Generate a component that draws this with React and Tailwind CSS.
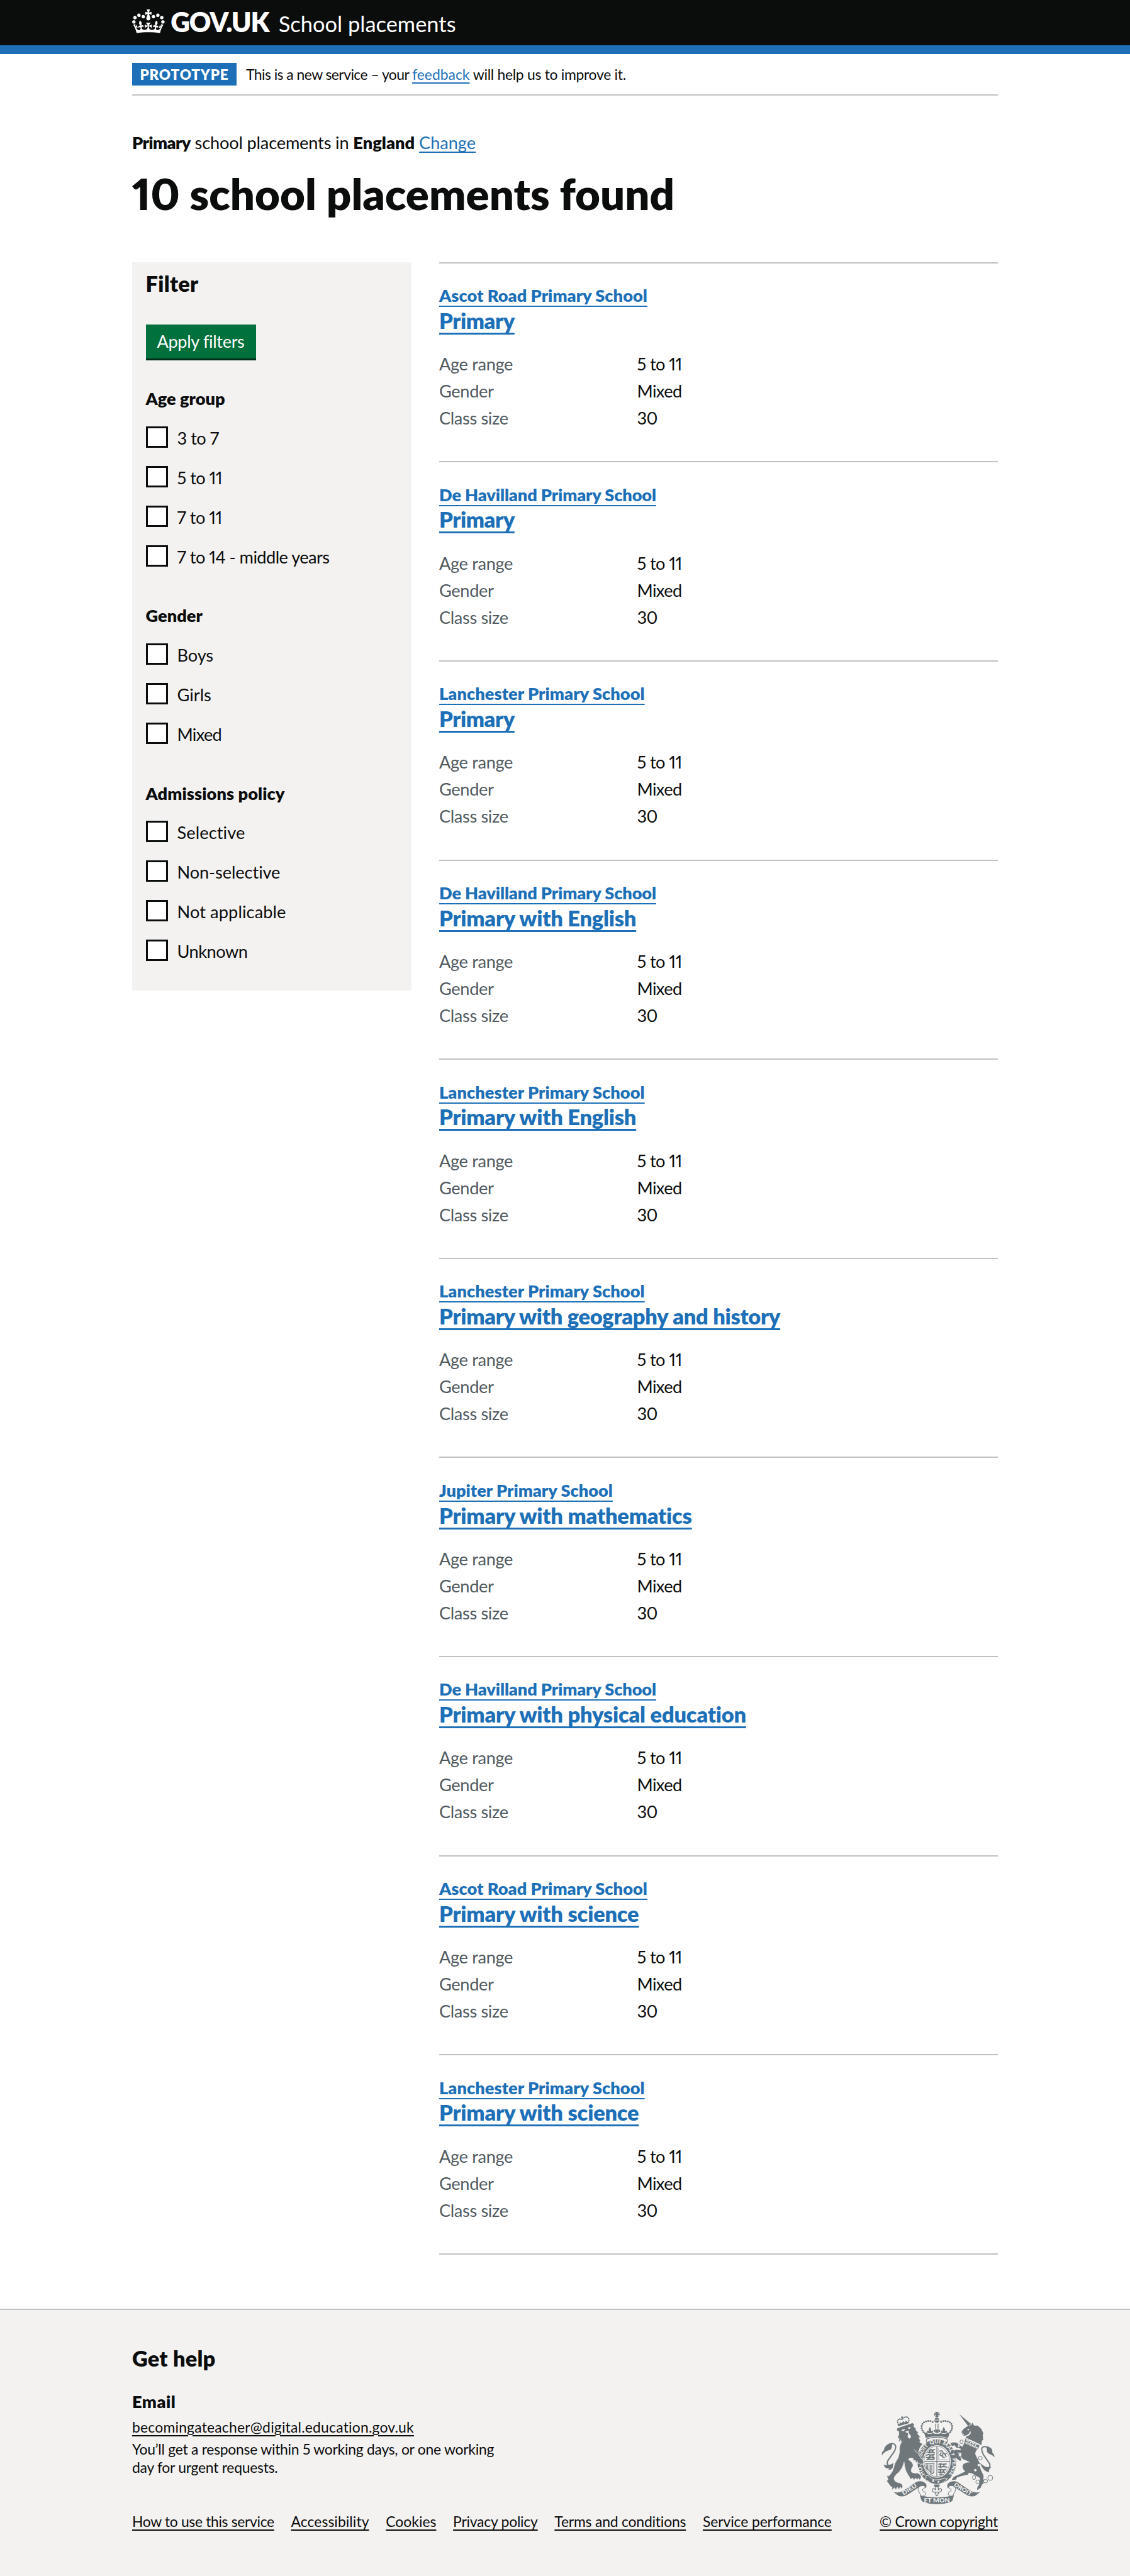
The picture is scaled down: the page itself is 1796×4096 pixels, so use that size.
import React from "react";

const PEARLS = [[366, 104], [352, 99], [338, 98], [324, 101], [311, 107], [301, 117], [296, 130], [296, 144], [301, 157], [308, 169]];
const LION_PEARLS = [[146, 118], [143, 108], [143, 98], [148, 90], [156, 86], [165, 88], [176, 84], [186, 76], [196, 73], [206, 75], [213, 83], [215, 94]];
const GREY = "#6f777b";
const PAPER = "#f3f2f1";

function CrestHalf() {
  return (
    <>
      <path fill={GREY} d="M115 550Q150 562 182 541L262 487Q296 474 322 496Q332 510 322 528Q306 506 280 520L215 562Q182 586 150 576Z" />
      <path fill={PAPER} stroke={GREY} strokeWidth="4" d="M322 520Q306 504 286 514Q268 526 276 545Q288 562 292 580Q310 580 322 566Q322 550 300 540Q300 532 322 520Z" />
      {PEARLS.map(([x, y]) => <circle key={`${x}-${y}`} cx={x} cy={y} r="6" fill={GREY} />)}
      <path fill={GREY} d="M349 136q12 16 6 28q12-10 14 2q-2 10-12 10h-16q-10 0-12-10q2-12 14-2q-6-12 6-28z" />
    </>
  );
}

function Crest() {
  return (
    <svg viewBox="36 36 728 592" className="h-[147.7px] w-[181.6px] font-black">
      <defs><path id="garter" d="M319 440A100 119 0 1 1 467 440" /></defs>
      <CrestHalf />
      <g transform="translate(786 0) scale(-1 1)"><CrestHalf /></g>
      {/* imperial crown */}
      <path fill={GREY} d="M380 40h26l-8 13l12-6v18l-12-6l6 13h-22l6-13l-12 6V47l12 6zM378 90q2-12 15-16q13 4 15 16zM376 94h34q-2 14-17 16q-15-2-17-16zM383 115h5v32h-5zM398 115h5v32h-5zM380 147l13 6l13-6l-5 11l12-5v16l-12-4l4 9h-24l4-9l-12 4v-16l12 5z" />
      <path fill={GREY} d="M309 165q10 14 20 4q2 14 18 10q14 4 22-6q6 10 24 6q18 4 24-6q8 10 22 6q16 4 18-10q10 10 20-4L464 206Q393 186 322 206Z" />
      <path fill={PAPER} stroke={GREY} strokeWidth="5" d="M330 212Q393 190 456 212Q464 222 456 234H330Q322 222 330 212Z" />
      {/* garter and shield */}
      <ellipse cx="393" cy="357" rx="124" ry="143" fill={GREY} />
      <ellipse cx="393" cy="356" rx="89" ry="104" fill={PAPER} />
      <ellipse cx="393" cy="356" rx="82" ry="97" fill="none" stroke={GREY} strokeWidth="3" />
      <path d="M393 258V454M311 355H475" stroke={GREY} strokeWidth="5" />
      <g stroke={GREY} strokeWidth="8" strokeLinecap="round" fill="none">
        <path d="M345 285l10-4l8 4l16-4M336 297l12 4l12-4l18 4M328 316l12-4l12 4l24-4M326 330l14 4l12-5l24 4M330 345l16-4l12 4l18-4M350 287l-6 10M366 283v14M350 318l-8 12M368 314v18" />
        <path d="M406 374l12-3l12 4l22-3M404 390l14 3l14-4l24 3M404 410l14-3l14 4l18-3M404 424l12 3l12-4l14 3M412 440l14-3M416 376v12M438 374v14M416 410v12M436 410v12" />
        <path strokeWidth="7" d="M412 290q16-8 20 10l12 8l8 18M420 300l-8 14l12 6M432 306l-4 20l12 6M442 312l12-8" />
      </g>
      <path d="M402 270V345H463" stroke={GREY} strokeWidth="2" fill="none" />
      <path fill="none" stroke={GREY} strokeWidth="5" d="M324 368q20 8 50-2v50q0 18-16 20q-12-24-32-34zM334 376v34M343 377v42M352 377v48M361 376v54" />
      <g fill={PAPER} fontSize="35">
        <text><textPath href="#garter" startOffset="2">HO</textPath></text>
        <text><textPath href="#garter" startOffset="122">SOIT</textPath></text>
        <text><textPath href="#garter" startOffset="214">QUI</textPath></text>
        <text><textPath href="#garter" startOffset="292">MAL</textPath></text>
        <text><textPath href="#garter" startOffset="372">Y</textPath></text>
        <text><textPath href="#garter" startOffset="407" textLength="108">PENSE</textPath></text>
      </g>
      <path fill={GREY} stroke={PAPER} strokeWidth="4" d="M322 448q16-8 24 6q12 16 34 20q34 2 62-12l18 4q-26 34-68 36q-40-2-58-24q-16 4-14-10q8-6 2-20z" />
      <circle cx="369" cy="480" r="6" fill={PAPER} />
      <circle cx="403" cy="486" r="6" fill={PAPER} />
      <path fill={GREY} d="M376 503h34v14h-34z" />
      <path fill={PAPER} stroke={GREY} strokeWidth="5" d="M393 512q14 14 8 28q14-20 22-4q0 14-14 16h-4q0 10-6 12q2 10-6 12q-8-2-6-12q-6-2-6-12h-4q-14-2-14-16q8-16 22 4q-6-14 8-28zM376 552h34" />
      {/* motto scroll */}
      <path fill={GREY} d="M284 572Q393 600 502 572L492 606Q470 626 393 628Q316 626 296 606Z" />
      <g fill={PAPER}>
        <text x="393" y="616" fontSize="41" textAnchor="middle" textLength="164" lengthAdjust="spacingAndGlyphs">ET MON</text>
        <text transform="translate(180 572) rotate(-32)" fontSize="34" textLength="104" lengthAdjust="spacingAndGlyphs">DIEU</text>
        <text transform="translate(499 510) rotate(31)" fontSize="34" textLength="126" lengthAdjust="spacingAndGlyphs">DROIT</text>
      </g>
      {/* lion */}
      <path fill={GREY} stroke={PAPER} strokeWidth="3" d="M137 146L156 138L238 110L250 122L244 132L264 150L256 153L279 175L268 177L290 204L277 204L288 222L283 232L303 245Q284 262 276 296L300 332L308 362L303 380L297 368L290 384L283 366L272 372L270 356L256 366L258 350L240 352L244 338L230 334Q216 332 212 345Q242 362 242 385Q224 408 232 424Q246 434 268 430Q290 436 294 456L284 476L276 462L268 474L258 462L246 476L240 462L226 470L216 452Q192 420 188 388L184 360Q178 396 152 424Q122 446 120 466Q122 486 150 492Q172 494 176 516L168 532L160 518L152 536L142 520L132 536L122 524L106 540L108 520Q92 514 86 498L72 480L82 474L74 448L88 448Q112 424 118 396Q122 366 146 334Q158 300 154 272Q158 244 172 226L162 240L164 218L150 236L153 208L142 208L151 182L150 162L140 164Z" />
      <path fill={PAPER} d="M166 156l22-8q2 14-10 14q-10 0-12-6zM208 140l18-4q0 12-10 12q-8 0-8-8zM190 168q10-8 26-8l-4 10l8 14q12 8 6 20q-8 12-16 0q-8-12 2-20l-6-10z" />
      <path fill="none" stroke={PAPER} strokeWidth="4" d="M247 280q30 24 50 62" />
      <path fill="none" stroke={GREY} strokeWidth="8" d="M108 384Q66 386 80 352L122 292Q144 250 112 242Q98 240 88 248" />
      <path fill={GREY} d="M42 318Q40 296 56 284Q58 246 106 238L108 256Q106 282 84 286Q58 294 42 318ZM54 376Q78 390 116 366L112 394Q104 412 84 408L92 400Q60 406 54 376Z" />
      <path fill={GREY} d="M146 132L214 112L216 98L206 104L196 96L188 108L178 98L170 112L158 106L154 118L144 116Z" />
      {LION_PEARLS.map(([x, y]) => <circle key={`${x}-${y}`} cx={x} cy={y} r="4.5" fill={GREY} />)}
      <path d="M172 68V90M164 76h16" stroke={GREY} strokeWidth="6" />
      {/* unicorn */}
      <path fill={GREY} d="M535 54L612 118L592 130Z" />
      <path fill={GREY} d="M548 170L564 148L590 130L612 124L618 108L630 127L654 128L666 140L676 148L690 178L685 184L688 218L680 224L676 254L664 244L580 206L576 198Q594 196 606 182Q612 172 606 160Q604 180 580 190L562 192L566 182L552 184L558 174Z" />
      <path fill={PAPER} d="M584 152l16-4l-4 10z" />
      <path fill={GREY} d="M576 208L664 254L656 276L568 234ZM568 238L652 278Q636 292 638 312Q652 340 668 372Q664 392 678 420L690 446V498L680 504L672 524L650 538Q646 520 662 504L668 462L640 446Q620 430 596 428L592 440L546 450L522 458L514 472L488 474Q496 452 520 446L574 420Q552 402 558 380Q570 360 606 362L580 350Q552 344 546 322L544 300L528 300L530 322L544 330L550 352L534 350L516 334L504 304L494 300L508 282L544 284Q550 276 536 270L518 268L504 252L490 258L478 240L496 234L522 236L532 250L556 262Z" />
      <path fill="none" stroke={PAPER} strokeWidth="5" d="M580 226l4-14l8 18l8-12l8 20l8-12l8 20l8-12l8 20l8-10M576 232l78 38" />
      <path fill="none" stroke={GREY} strokeWidth="8" d="M700 404Q736 404 730 372L690 314Q662 258 704 262Q716 262 726 272" />
      <path fill={GREY} d="M706 258Q752 266 746 300Q760 310 760 330Q746 314 726 308Q708 298 712 276ZM668 366Q706 402 742 392Q722 402 726 424Q690 424 668 366Z" />
      <g fill={PAPER} stroke={GREY} strokeWidth="4">
        <ellipse cx="550" cy="231" rx="10" ry="12" />
        <ellipse cx="541" cy="312" rx="10" ry="13" />
        <circle cx="670" cy="335" r="12" />
        <circle cx="533" cy="258" r="8" />
        <ellipse cx="630" cy="458" rx="10" ry="14" />
        <circle cx="653" cy="486" r="12" />
        <ellipse cx="703" cy="482" rx="13" ry="11" />
        <circle cx="733" cy="461" r="16" />
      </g>
      <circle cx="660" cy="380" r="8" fill={PAPER} />
      <circle cx="638" cy="412" r="8" fill={PAPER} />
    </svg>
  );
}

function Crown() {
  return (
    <svg viewBox="0 0 132 97" className="mt-[15.2px] h-[38px] w-[51.7px] self-start fill-white">
      <path d="M25 30.2c3.5 1.5 7.7-.2 9.1-3.7 1.5-3.6-.2-7.8-3.9-9.2-3.6-1.4-7.6.3-9.1 3.9-1.4 3.5.3 7.5 3.9 9zM9 39.5c3.6 1.5 7.8-.2 9.2-3.7 1.5-3.6-.2-7.8-3.9-9.1-3.6-1.5-7.6.2-9.1 3.8-1.4 3.5.3 7.5 3.8 9zM4.4 57.2c3.5 1.5 7.7-.2 9.1-3.8 1.5-3.6-.2-7.7-3.9-9.1-3.5-1.5-7.6.3-9.1 3.8-1.4 3.5.3 7.6 3.9 9.1zm38.3-21.4c3.5 1.5 7.7-.2 9.1-3.8 1.5-3.6-.2-7.7-3.9-9.1-3.6-1.5-7.6.3-9.1 3.8-1.3 3.6.4 7.7 3.9 9.1zm64.4-5.6c-3.6 1.5-7.8-.2-9.1-3.7-1.5-3.6.2-7.8 3.8-9.2 3.6-1.4 7.7.3 9.2 3.9 1.3 3.5-.4 7.5-3.9 9zm15.9 9.3c-3.6 1.5-7.7-.2-9.1-3.7-1.5-3.6.2-7.8 3.7-9.1 3.6-1.5 7.7.2 9.2 3.8 1.5 3.5-.3 7.5-3.8 9zm4.7 17.7c-3.6 1.5-7.8-.2-9.2-3.8-1.5-3.6.2-7.7 3.9-9.1 3.6-1.5 7.7.3 9.2 3.8 1.3 3.5-.4 7.6-3.9 9.1zM89.3 35.8c-3.6 1.5-7.8-.2-9.2-3.8-1.4-3.6.2-7.7 3.9-9.1 3.6-1.5 7.7.3 9.2 3.8 1.4 3.6-.3 7.7-3.9 9.1zM69.7 17.7l8.9 4.7V9.3l-8.9 2.8c-.2-.3-.5-.6-.9-.9L72.4 0H59.6l3.5 11.2c-.3.3-.6.5-.9.9l-8.8-2.8v13.1l8.8-4.7c.3.3.6.7.9.9l-5 15.4v.1c-.2.8-.4 1.6-.4 2.4 0 4.1 3.1 7.5 7 8.1h.2c.3 0 .7.1 1 .1.4 0 .7 0 1-.1h.2c4-.6 7.1-4.1 7.1-8.1 0-.8-.1-1.7-.4-2.4V34l-5.1-15.4c.4-.2.7-.6 1-.9zM66 92.8c16.9 0 32.8 1.1 47.1 3.2 4-16.9 8.9-26.7 14-33.5l-9.6-3.4c1 4.9 1.1 7.2 0 10.2-1.5-1.4-3-4.3-4.2-8.7L108.6 76c2.8-2 5-3.2 7.5-3.3-4.4 9.4-10 11.9-13.6 11.2-4.3-.8-6.3-4.6-5.6-7.9 1-4.7 5.7-5.9 8-.5 4.3-8.7-3-11.4-7.6-8.8 7.1-7.2 7.9-13.5 2.1-21.1-8 6.1-8.1 12.3-4.5 20.8-4.7-5.4-12.1-2.5-9.5 6.2 3.4-5.2 7.9-2 7.2 3.1-.6 4.3-6.4 7.8-13.5 7.2-10.3-.9-10.9-8-11.2-13.8 2.5-.5 7.1 1.8 11 7.3L80.2 60c-4.1 4.4-8 5.3-12.3 5.4 1.4-4.4 8-11.6 8-11.6H55.5s6.4 7.2 7.9 11.6c-4.2-.1-8-1-12.3-5.4l1.4 16.4c3.9-5.5 8.5-7.7 10.9-7.3-.3 5.8-.9 12.8-11.1 13.8-7.2.6-12.9-2.9-13.5-7.2-.7-5 3.8-8.3 7.1-3.1 2.7-8.7-4.6-11.6-9.4-6.2 3.7-8.5 3.6-14.7-4.6-20.8-5.8 7.6-5 13.9 2.2 21.1-4.7-2.6-11.9.1-7.7 8.8 2.3-5.5 7.1-4.2 8.1.5.7 3.3-1.3 7.1-5.7 7.9-3.5.7-9-1.8-13.5-11.2 2.5.1 4.7 1.3 7.5 3.3l-4.7-15.4c-1.2 4.4-2.7 7.2-4.3 8.7-1.1-3-.9-5.3 0-10.2l-9.5 3.4c5 6.9 9.9 16.7 14 33.5 14.8-2.1 30.8-3.2 47.7-3.2z" />
    </svg>
  );
}

const FILTERS = [
  { title: "Age group", tracking: "tracking-[0px]", options: [["3 to 7", "tracking-[-0.5px]"], ["5 to 11", "tracking-[-0.54px]"], ["7 to 11", "tracking-[-0.54px]"], ["7 to 14 - middle years", "tracking-[-0.54px]"]] },
  { title: "Gender", tracking: "tracking-[0px]", options: [["Boys", "tracking-[-0.1px]"], ["Girls", "tracking-[0px]"], ["Mixed", "tracking-[-0.7px]"]] },
  { title: "Admissions policy", tracking: "tracking-[0.07px]", options: [["Selective", "tracking-[0.1px]"], ["Non-selective", "tracking-[-0.1px]"], ["Not applicable", "tracking-[0.1px]"], ["Unknown", "tracking-[-0.5px]"]] },
];

const ASCOT = { name: "Ascot Road Primary School", tracking: "tracking-[0.02px]" };
const HAVILLAND = { name: "De Havilland Primary School", tracking: "tracking-[-0.13px]" };
const LANCHESTER = { name: "Lanchester Primary School", tracking: "tracking-[0.05px]" };
const JUPITER = { name: "Jupiter Primary School", tracking: "tracking-[0px]" };

const PLACEMENTS = [
  [ASCOT, "Primary", "tracking-[-0.41px]"],
  [HAVILLAND, "Primary", "tracking-[-0.41px]"],
  [LANCHESTER, "Primary", "tracking-[-0.41px]"],
  [HAVILLAND, "Primary with English", "tracking-[-0.22px]"],
  [LANCHESTER, "Primary with English", "tracking-[-0.22px]"],
  [LANCHESTER, "Primary with geography and history", "tracking-[-0.26px]"],
  [JUPITER, "Primary with mathematics", "tracking-[-0.2px]"],
  [HAVILLAND, "Primary with physical education", "tracking-[-0.2px]"],
  [ASCOT, "Primary with science", "tracking-[-0.2px]"],
  [LANCHESTER, "Primary with science", "tracking-[-0.2px]"],
];

const DETAILS = [
  ["Age range", "5 to 11"],
  ["Gender", "Mixed"],
  ["Class size", "30"],
];

const FOOTER_LINKS = [
  ["How to use this service", "tracking-[-0.34px]"],
  ["Accessibility", "tracking-[0.06px]"],
  ["Cookies", "tracking-[0.01px]"],
  ["Privacy policy", "tracking-[-0.23px]"],
  ["Terms and conditions", "tracking-[-0.19px]"],
  ["Service performance", "tracking-[-0.1px]"],
];

function Header() {
  return (
    <header className="h-[86px] border-b-[14px] border-[#1d70b8] bg-[#0b0c0c] text-white">
      <div className="mx-auto flex w-[1376px] items-baseline">
        <Crown />
        <span className="ml-[9.5px] text-[42.6px] leading-[70px] font-extrabold tracking-[-1.2px]">GOV.UK</span>
        <span className="ml-[15.5px] text-[34.4px] leading-none tracking-[0.02px]">School placements</span>
      </div>
    </header>
  );
}

function PhaseBanner() {
  return (
    <div className="flex h-[66px] items-start border-b-2 border-[#bfc2c4] pt-[14px]">
      <strong className="h-9 w-[166px] bg-[#1d70b8] text-center text-[22.4px] leading-[37px] font-extrabold tracking-[0.85px] text-white">PROTOTYPE</strong>
      <span className="ml-[15px] text-[22.9px] leading-[37px] tracking-[-0.54px]">
        This is a new service – your{" "}
        <a className="tracking-[-0.01px] text-[#1d70b8] underline decoration-[1.5px] underline-offset-[3.5px] [text-decoration-skip-ink:none]">feedback</a>{" "}
        <span className="tracking-[-0.29px]">will help us to improve it.</span>
      </span>
    </div>
  );
}

function FilterPanel() {
  return (
    <aside className="h-[1158px] w-[444px] bg-[#f3f2f1] pt-[12.3px] pl-[21.5px]">
      <h2 className="h-[43px] text-[34.4px] leading-[43px] font-extrabold tracking-[0.28px]">Filter</h2>
      <button className="mt-[44px] block h-[57px] w-[175px] border-b-3 border-[#002d18] bg-[#00703c] text-[27.2px] leading-[54px] tracking-[-0.35px] text-white">Apply filters</button>
      <div className="mt-[42px] flex flex-col gap-[30.6px]">
        {FILTERS.map((group) => (
          <fieldset key={group.title}>
            <legend className={`h-9 text-[27.2px] leading-[38px] font-extrabold ${group.tracking}`}>{group.title}</legend>
            <div className="pt-[26.7px]">
              {group.options.map(([label, tracking]) => (
                <label key={label} className="flex h-[63.03px] items-start">
                  <span className="h-[34px] w-[35px] border-3 border-[#0b0c0c] bg-white" />
                  <span className={`ml-[15px] text-[27.2px] leading-[38.6px] ${tracking}`}>{label}</span>
                </label>
              ))}
            </div>
          </fieldset>
        ))}
      </div>
    </aside>
  );
}

function Placement({ school, subject, tracking }) {
  return (
    <li className="h-[316.62px] border-t-2 border-[#bfc2c4] pt-[33.4px]">
      <h2 className="font-extrabold text-[#1d70b8]">
        <a className={`block h-[35.8px] text-[27.2px] leading-9 underline decoration-[1.5px] underline-offset-[5.6px] [text-decoration-skip-ink:none] ${school.tracking}`}>{school.name}</a>
        <a className={`block h-[43px] text-[34.4px] leading-[43px] underline decoration-[2.75px] underline-offset-[6px] [text-decoration-skip-ink:none] ${tracking}`}>{subject}</a>
      </h2>
      <dl className="mt-[30.3px] flex flex-col gap-[7px] text-[27.2px] leading-9">
        {DETAILS.map(([term, value]) => (
          <div key={term} className="flex">
            <dt className="w-[314.5px] tracking-[-0.36px] text-[#505a5f]">{term}</dt>
            <dd className="tracking-[-0.6px]">{value}</dd>
          </div>
        ))}
      </dl>
    </li>
  );
}

function Footer() {
  return (
    <footer className="mt-[86px] h-[426px] border-t-2 border-[#bfc2c4] bg-[#f3f2f1]">
      <div className="mx-auto w-[1376px] pt-[55.6px]">
        <h2 className="text-[34.4px] leading-[43px] font-extrabold tracking-[0.2px]">Get help</h2>
        <div className="mt-[30px] flex items-end justify-between text-[22.9px] leading-[28.7px]">
          <div>
            <h3 className="text-[27.2px] leading-9 font-extrabold tracking-[0.5px]">Email</h3>
            <p className="mt-[7.2px] tracking-[0.2px]">
              <a className="underline decoration-[1.5px] underline-offset-[3.5px]">becomingateacher@digital.education.gov.uk</a>
            </p>
            <p className="mt-[7.2px] w-[600px] tracking-[-0.26px]">You’ll get a response within 5 working days, or one working<br />day for urgent requests.</p>
            <ul className="mt-[57.4px] flex gap-[26.7px]">
              {FOOTER_LINKS.map(([link, tracking]) => (
                <li key={link}>
                  <a className={`underline decoration-[1.5px] underline-offset-[3.5px] [text-decoration-skip-ink:none] ${tracking}`}>{link}</a>
                </li>
              ))}
            </ul>
          </div>
          <div className="flex flex-col items-end">
            <div className="mr-[4px] mb-[13.6px]"><Crest /></div>
            <a className="tracking-[-0.24px] underline decoration-[1.5px] underline-offset-[3.5px] [text-decoration-skip-ink:none]">© Crown copyright</a>
          </div>
        </div>
      </div>
    </footer>
  );
}

export default function App() {
  return (
    <div className="h-[4096px] w-[1796px] overflow-hidden bg-white font-['Lato','Noto_Sans',sans-serif] whitespace-nowrap text-[#0b0c0c] lining-nums proportional-nums">
      <Header />
      <main className="mx-auto w-[1376px]">
        <PhaseBanner />
        <p className="mt-[57px] text-[27.2px] leading-9 tracking-[-0.17px]">
          <b className="font-extrabold tracking-[-0.6px]">Primary</b> school placements in <b className="font-extrabold tracking-[0.05px]">England</b>{" "}
          <a className="tracking-[-0.05px] text-[#1d70b8] underline decoration-[1.5px] underline-offset-[4px] [text-decoration-skip-ink:none]">Change</a>
        </p>
        <h1 className="mt-[26.5px] text-[68.8px] leading-[71.6px] font-extrabold tracking-[0.03px]">10 school placements found</h1>
        <div className="mt-[73.6px] flex items-start justify-between">
          <FilterPanel />
          <ol className="w-[888px] border-b-2 border-[#bfc2c4]">
            {PLACEMENTS.map(([school, subject, tracking], i) => <Placement key={i} school={school} subject={subject} tracking={tracking} />)}
          </ol>
        </div>
      </main>
      <Footer />
    </div>
  );
}
